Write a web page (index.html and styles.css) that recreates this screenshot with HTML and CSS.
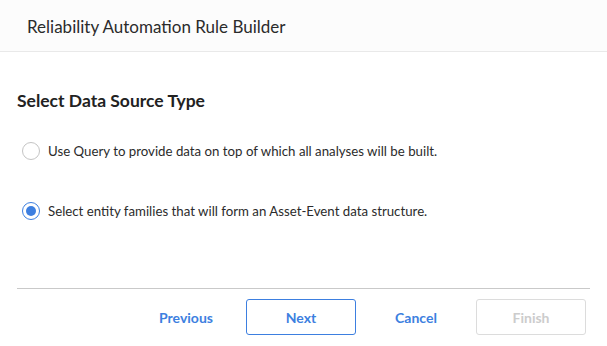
FILE: index.html
```html
<!DOCTYPE html>
<html>
<head>
<meta charset="utf-8">
<link rel="stylesheet" href="styles.css">
</head>
<body>
<div class="dialog">
  <header class="header">
    <h1 class="title">Reliability Automation Rule Builder</h1>
  </header>
  <main class="content">
    <h2 class="section-title">Select Data Source Type</h2>
    <div class="options">
      <label class="option">
        <span class="radio"></span>
        <span class="option-text">Use Query to provide data on top of which all analyses will be built.</span>
      </label>
      <label class="option">
        <span class="radio checked"></span>
        <span class="option-text">Select entity families that will form an Asset-Event data structure.</span>
      </label>
    </div>
  </main>
  <footer class="footer">
    <div class="divider"></div>
    <div class="buttons">
      <button class="btn btn-link">Previous</button>
      <button class="btn btn-outline">Next</button>
      <button class="btn btn-link">Cancel</button>
      <button class="btn btn-disabled">Finish</button>
    </div>
  </footer>
</div>
</body>
</html>
```

FILE: styles.css
```css
html, body {
  margin: 0;
  padding: 0;
  background: #ffffff;
}
body {
  font-family: "Lato", "Liberation Sans", sans-serif;
  color: #333;
  width: 607px;
  height: 346px;
  overflow: hidden;
}
.dialog {
  display: flex;
  flex-direction: column;
  height: 346px;
}
.header {
  height: 51px;
  background: #fcfcfc;
  border-bottom: 1px solid #e9e9e9;
  display: flex;
  align-items: center;
  padding-left: 27px;
}
.title {
  margin: 0;
  font-size: 17px;
  font-weight: 400;
  color: #2b2b2b;
  padding-top: 1px;
}
.content {
  padding: 38px 17px 0 17px;
  flex: 1;
}
.section-title {
  margin: 0;
  font-size: 17.5px;
  font-weight: 700;
  color: #222;
  line-height: 22px;
}
.options {
  display: flex;
  flex-direction: column;
  gap: 40px;
  margin-top: 29px;
}
.option {
  display: flex;
  align-items: center;
  height: 20px;
  padding-left: 5px;
}
.radio {
  width: 16px;
  height: 16px;
  border: 1px solid #c4c4c4;
  border-radius: 50%;
  box-sizing: content-box;
  display: flex;
  align-items: center;
  justify-content: center;
  margin-right: 8px;
}
.radio.checked {
  border-color: #3d7fe0;
}
.radio.checked::after {
  content: "";
  width: 10px;
  height: 10px;
  border-radius: 50%;
  background: #3d7fe0;
}
.option-text {
  font-size: 13.25px;
  color: #2b2b2b;
}
.footer {
  padding: 0 17px 11px 17px;
}
.divider {
  height: 1px;
  background: #c9c9c9;
}
.buttons {
  display: flex;
  justify-content: flex-end;
  gap: 5px;
  margin-top: 10px;
  padding-right: 4px;
}
.btn {
  width: 110px;
  height: 36px;
  font-family: inherit;
  font-size: 14px;
  font-weight: 700;
  border-radius: 3px;
  background: #fff;
  border: 1px solid transparent;
  color: #3d7fe0;
  padding: 0;
}
.btn-outline {
  border-color: #3d7fe0;
}
.btn-disabled {
  border-color: #dcdcdc;
  color: #cccccc;
}
```
